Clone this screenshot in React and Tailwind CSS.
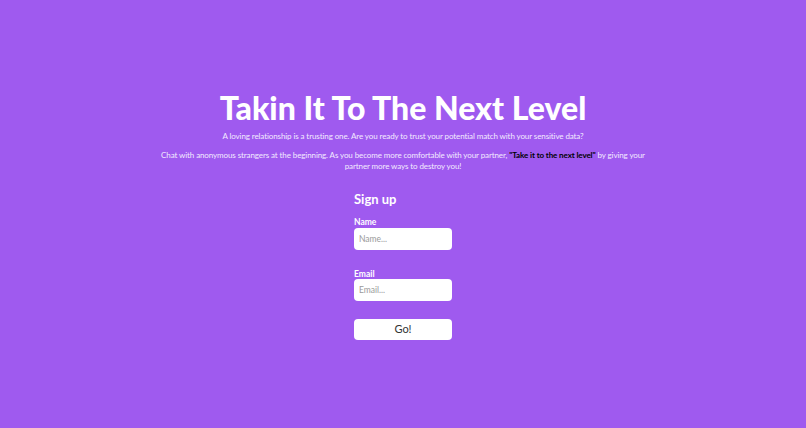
import React from 'react'

const App = () => {
  return (
    <div className="min-h-screen bg-[#9f5aef] flex items-center justify-center text-white font-['Lato','Noto_Sans',sans-serif]">
      <div className="flex flex-col items-center">
        {/* heading */}
        <h1 className="text-[32px] leading-[38px] font-black">Takin It To The Next Level</h1>
        <p className="text-[8px] leading-[11px] tracking-[-0.1px] mt-[4px] text-center text-[#f3eaff]">
          A loving relationship is a trusting one. Are you ready to trust your potential match with your sensitive data?
        </p>
        <p className="text-[8px] leading-[11px] tracking-[-0.1px] mt-[8px] w-[494px] text-center text-[#f3eaff]">
          Chat with anonymous strangers at the beginning. As you become more comfortable with your partner,{' '}
          <span className="font-bold text-black">"Take it to the next level"</span> by giving your partner more ways to destroy you!
        </p>

        {/* sign up form */}
        <form className="w-[98px] mt-[19px] flex flex-col" onSubmit={(e) => e.preventDefault()}>
          <h2 className="text-[13px] leading-[16px] font-bold">Sign up</h2>
          <label className="text-[8.5px] leading-[10px] font-bold mt-[10px]">Name</label>
          <input
            className="mt-[1px] h-[22px] rounded-[4px] bg-white px-[5px] text-[8.5px] text-gray-700 placeholder:text-[#9a9a9a] outline-none"
            placeholder="Name..."
          />
          <label className="text-[8.5px] leading-[10px] font-bold mt-[19px]">Email</label>
          <input
            className="mt-[0px] h-[22px] rounded-[4px] bg-white px-[5px] text-[8.5px] text-gray-700 placeholder:text-[#9a9a9a] outline-none"
            placeholder="Email..."
          />
          <button className="mt-[18px] h-[21px] rounded-[4px] bg-white text-[11px] text-[#333]">Go!</button>
        </form>
      </div>
    </div>
  )
}

export default App
